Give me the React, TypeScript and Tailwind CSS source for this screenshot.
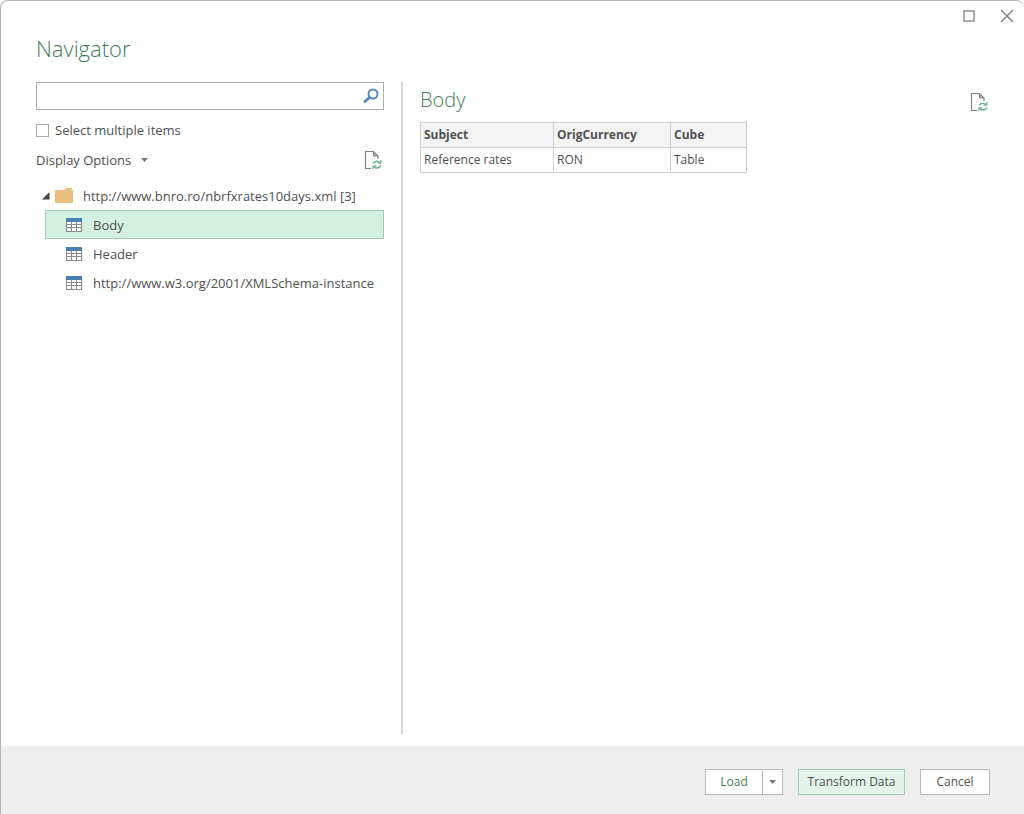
import { useState } from 'react'

const items = ['Body', 'Header', 'http://www.w3.org/2001/XMLSchema-instance']

function RefreshFileIcon() {
  return (
    <svg width="20" height="20" viewBox="0 0 20 20" fill="none">
      <path d="M8 18.500H2.500v-17h8L15 6v3" stroke="#808080" strokeWidth="1.200" />
      <path d="M10.500 1.500V6H15z" fill="#b5b5b5" stroke="#808080" />
      <path d="M10.200 13.500c.6-1.500 1.900-2.300 3.300-2.300 1.200 0 2.200.4 3 1.300M17.800 15.500c-.6 1.700-2.100 2.500-3.800 2.500-1.200 0-2.200-.4-3-1.300" stroke="#6fae91" strokeWidth="1.400" />
      <path d="M17.800 10v3.200h-3.200M10.100 19v-3.200h3.200" stroke="#6fae91" strokeWidth="1.300" />
    </svg>
  )
}

function TableIcon() {
  return (
    <svg width="16" height="14" viewBox="0 0 16 14">
      <rect width="16" height="14" fill="#8a8a8a" />
      <rect width="16" height="4" fill="#4a7fb5" />
      <path d="M1 4h4v2H1zM6 4h4v2H6zM11 4h4v2h-4zM1 7h4v2H1zM6 7h4v2H6zM11 7h4v2h-4zM1 10h4v3H1zM6 10h4v3H6zM11 10h4v3h-4z" fill="#fff" />
    </svg>
  )
}

function CaretIcon() {
  return (
    <svg width="7" height="4" viewBox="0 0 7 4">
      <path d="M0 0h7L3.500 4z" fill="#777" />
    </svg>
  )
}

export default function App() {
  const [selected, setSelected] = useState('Body')
  const [multiple, setMultiple] = useState(false)
  const [query, setQuery] = useState('')

  return (
    <div className="min-h-screen flex flex-col rounded-t-lg border-t border-l border-[#b4b4b4] bg-white font-['Open_Sans',sans-serif] text-[13px] leading-5 text-[#505050]">
      <div className="flex justify-end gap-[22px] pr-[9px] pt-[7px]">
        <button aria-label="Maximize" className="size-4 flex items-center justify-center">
          <svg width="12" height="12" viewBox="0 0 12 12" fill="none">
            <rect x="1" y="1" width="10" height="10" stroke="#8c8c8c" strokeWidth="1.500" />
          </svg>
        </button>
        <button aria-label="Close" className="size-4 flex items-center justify-center">
          <svg width="14" height="14" viewBox="0 0 14 14" fill="none">
            <path d="M1 1l12 12M13 1L1 13" stroke="#8c8c8c" strokeWidth="1.700" />
          </svg>
        </button>
      </div>

      <h1 className="px-[35px] mt-2 text-[22px] leading-8 font-light text-[#3f7d5a]">Navigator</h1>

      <div className="grow flex px-[35px] pt-[18px] pb-3">
        <div className="w-[348px] shrink-0">
          <div className="flex items-center h-7 border border-[#ababab] bg-white pr-1">
            <input
              type="text"
              aria-label="Search"
              value={query}
              onChange={(e) => setQuery(e.target.value)}
              className="grow min-w-0 h-full px-1 outline-none"
            />
            <button aria-label="Run search">
              <svg width="16" height="16" viewBox="0 0 16 16" fill="none">
                <circle cx="10" cy="6" r="4.500" stroke="#5b87b8" strokeWidth="2" />
                <path d="M6.500 9.500L2 13.500" stroke="#5b87b8" strokeWidth="3" strokeLinecap="round" />
              </svg>
            </button>
          </div>

          <label className="flex items-center gap-[6px] mt-[10px] h-5">
            <input
              type="checkbox"
              checked={multiple}
              onChange={(e) => setMultiple(e.target.checked)}
              className="appearance-none size-[13px] border border-[#ababab] bg-white checked:bg-[#3f7d5a]"
            />
            Select multiple items
          </label>

          <div className="flex items-center justify-between mt-[10px] h-5">
            <button className="flex items-center gap-[10px]">
              Display Options
              <CaretIcon />
            </button>
            <button aria-label="Refresh" className="mr-[1px]">
              <RefreshFileIcon />
            </button>
          </div>

          <ul className="mt-3">
            <li>
              <div className="flex items-center h-7 pl-[6px]">
                <svg width="8" height="8" viewBox="0 0 8 8" className="mr-1">
                  <path d="M7.500 0v7.500H0z" fill="#444" />
                </svg>
                <svg width="20" height="16" viewBox="0 0 20 16" className="mr-[9px]">
                  <path d="M1 2h9l2-2h6v2h1v13H1z" fill="#e8bf7c" />
                </svg>
                <span className="whitespace-nowrap">http://www.bnro.ro/nbrfxrates10days.xml [3]</span>
              </div>
              <ul className="ml-[9px]">
                {items.map((item) => (
                  <li key={item}>
                    <button
                      onClick={() => setSelected(item)}
                      className={`flex items-center gap-[11px] w-full h-[29px] pl-5 border whitespace-nowrap ${
                        selected === item
                          ? 'bg-[#d3f0e0] border-[#9fcdb4]'
                          : 'border-transparent'
                      }`}
                    >
                      <TableIcon />
                      {item}
                    </button>
                  </li>
                ))}
              </ul>
            </li>
          </ul>
        </div>

        <div className="grow ml-[17px] pl-[17px] border-l-2 border-[#d8d8d8]">
          <div className="flex items-start justify-between h-10">
            <h2 className="mt-[2px] text-xl leading-8 font-light text-[#3f7d5a]">{selected}</h2>
            <button aria-label="Refresh preview" className="mt-[10px]">
              <RefreshFileIcon />
            </button>
          </div>
          <table className="table-fixed border-collapse w-[327px] text-left text-xs">
            <thead>
              <tr className="h-[25px] bg-[#f3f3f3]">
                <th className="w-[133px] border border-[#d0d0d0] px-[3px] font-bold">Subject</th>
                <th className="w-[117px] border border-[#d0d0d0] px-[3px] font-bold">OrigCurrency</th>
                <th className="border border-[#d0d0d0] px-[3px] font-bold">Cube</th>
              </tr>
            </thead>
            <tbody>
              <tr className="h-[25px]">
                <td className="border border-[#d0d0d0] px-[3px]">Reference rates</td>
                <td className="border border-[#d0d0d0] px-[3px]">RON</td>
                <td className="border border-[#d0d0d0] px-[3px]">Table</td>
              </tr>
            </tbody>
          </table>
        </div>
      </div>

      <div className="flex items-center justify-end gap-[15px] h-[68px] pr-[34px] pt-1 bg-[#eeeeee] text-xs">
        <div className="flex h-[26px] border border-[#bababa] bg-white">
          <button className="w-14 text-[#3f7d5a]">Load</button>
          <button aria-label="More load options" className="flex items-center justify-center w-5 border-l border-[#bababa]">
            <CaretIcon />
          </button>
        </div>
        <button className="h-[26px] w-[107px] border border-[#9fcdb4] bg-[#e3f3ea]">Transform Data</button>
        <button className="h-[26px] w-[70px] border border-[#bababa] bg-white">Cancel</button>
      </div>
    </div>
  )
}
